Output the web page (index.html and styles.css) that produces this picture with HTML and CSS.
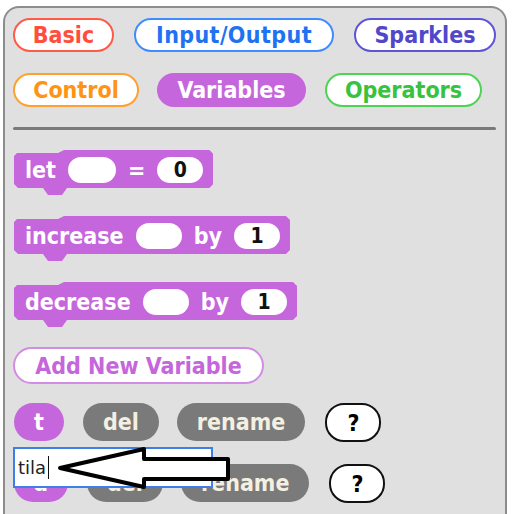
FILE: index.html
```html
<!DOCTYPE html>
<html>
<head>
<meta charset="utf-8">
<link rel="stylesheet" href="styles.css">
</head>
<body>
<div class="panel">
  <div class="cat-row">
    <span class="cat cat-basic">Basic</span>
    <span class="cat cat-io">Input/Output</span>
    <span class="cat cat-sparkles">Sparkles</span>
  </div>
  <div class="cat-row">
    <span class="cat cat-control">Control</span>
    <span class="cat cat-variables">Variables</span>
    <span class="cat cat-operators">Operators</span>
  </div>
  <div class="sep"></div>
  <div class="blocks">
    <div class="block block-let"><span class="kw">let</span><span class="slot slot-wide"></span><span class="kw">=</span><span class="slot">0</span></div>
    <div class="block"><span class="kw">increase</span><span class="slot"></span><span class="kw">by</span><span class="slot">1</span></div>
    <div class="block"><span class="kw">decrease</span><span class="slot"></span><span class="kw">by</span><span class="slot">1</span></div>
  </div>
  <div class="add-var">Add New Variable</div>
  <div class="vars">
    <div class="var-row">
      <span class="pill pill-var">t</span>
      <span class="pill pill-grey">del</span>
      <span class="pill pill-grey">rename</span>
      <span class="pill pill-help">?</span>
    </div>
    <div class="var-row">
      <span class="pill pill-var">a</span>
      <span class="pill pill-grey">del</span>
      <span class="pill pill-grey">rename</span>
      <span class="pill pill-help">?</span>
    </div>
    <div class="rename-box">tila<span class="caret"></span></div>
    <svg class="arrow" width="185" height="50" viewBox="0 0 185 50">
      <polygon points="5,24 89,5 89,15 173,15 173,35 89,35 89,43" fill="#fff" stroke="#000" stroke-width="4" stroke-linejoin="round"/>
    </svg>
  </div>
</div>
</body>
</html>
```
FILE: styles.css
```css
html, body {
  margin: 0;
  padding: 0;
  background: #fff;
  overflow: hidden;
  height: 514px;
}
body {
  font-family: "DejaVu Sans Condensed", "DejaVu Sans", Verdana, sans-serif;
}
.panel {
  box-sizing: border-box;
  width: 504px;
  height: 540px;
  margin: 6px 0 0 3px;
  border: 2px solid #8d8d8d;
  border-bottom: none;
  border-radius: 16px 16px 0 0;
  background: #e0e0e0;
  padding: 10px 8px 0 8px;
}
.cat-row {
  display: flex;
  gap: 20px;
}
.cat-row + .cat-row {
  margin-top: 21px;
}
.cat {
  box-sizing: border-box;
  height: 34px;
  border: 2px solid;
  border-radius: 17px;
  background: #fff;
  display: flex;
  align-items: center;
  justify-content: center;
  font-weight: bold;
  font-size: 23px;
}
.cat-basic { width: 101px; color: #ff4e3c; border-color: #ff5a48; }
.cat-io { width: 200px; color: #1f72f2; border-color: #3f8cff; letter-spacing: 0.4px; }
.cat-sparkles { width: 142px; color: #5047c9; border-color: #5d55d6; }
.cat-control { width: 126px; color: #ff9412; border-color: #ffa030; margin-right: -2px; }
.cat-variables { width: 149px; color: #fff; background: #c566dc; border-color: #c566dc; margin-right: -1px; }
.cat-operators { width: 157px; color: #37c23f; border-color: #4ed454; }
.sep {
  margin-top: 20px;
  height: 3px;
  width: 483px;
  background: #7a7a7a;
  border-radius: 2px;
}
.blocks {
  margin-top: 20px;
  display: flex;
  flex-direction: column;
  align-items: flex-start;
  gap: 21px;
  padding-left: 1px;
}
.block {
  display: flex;
  align-items: center;
  gap: 12px;
  padding: 7px 10px 12px 11px;
  background: #c566dc;
  clip-path: polygon(0 6px, 3px 3px, 44px 3px, 50px 0, calc(100% - 4px) 0, 100% 4px, 100% calc(100% - 11px), calc(100% - 4px) calc(100% - 7px), 53px calc(100% - 7px), 48px 100%, 34px 100%, 29px calc(100% - 7px), 4px calc(100% - 7px), 0 calc(100% - 11px));
}
.kw {
  color: #fff;
  font-weight: bold;
  font-size: 23px;
  line-height: 26px;
}
.slot {
  width: 46px;
  height: 26px;
  border-radius: 13px;
  background: #fff;
  color: #111;
  font-weight: bold;
  font-size: 21px;
  display: flex;
  align-items: center;
  justify-content: center;
}
.slot-wide { width: 48px; }
.add-var {
  box-sizing: border-box;
  margin-top: 20px;
  width: 251px;
  height: 37px;
  border: 2px solid #d38ce3;
  border-radius: 19px;
  background: #fff;
  color: #c566dc;
  font-weight: bold;
  font-size: 23px;
  display: flex;
  align-items: center;
  justify-content: center;
}
.vars {
  position: relative;
  margin-top: 19px;
  padding-left: 1px;
}
.var-row {
  display: flex;
  gap: 18px;
}
.var-row + .var-row {
  margin-top: 22px;
}
.pill {
  box-sizing: border-box;
  height: 38px;
  border-radius: 19px;
  padding: 0 20px;
  display: flex;
  align-items: center;
  font-weight: bold;
  font-size: 23px;
}
.pill-var { background: #c566dc; color: #fff; margin-right: 1px; }
.pill-grey { background: #7a7a7a; color: #f3f0e2; }
.pill-help { background: #fff; color: #000; border: 2px solid #111; height: 39px; padding: 0 20px; margin-left: 2px; }
.rename-box {
  position: absolute;
  left: 0;
  top: 44px;
  box-sizing: border-box;
  width: 200px;
  height: 41px;
  border: 2px solid #3d7fe6;
  background: #fff;
  padding-left: 3px;
  display: flex;
  align-items: center;
  font-family: "DejaVu Sans", sans-serif;
  font-size: 18px;
  color: #222;
}
.caret {
  display: inline-block;
  width: 1px;
  height: 23px;
  background: #111;
  margin-left: 2px;
}
.arrow {
  position: absolute;
  left: 42px;
  top: 41px;
}
```
